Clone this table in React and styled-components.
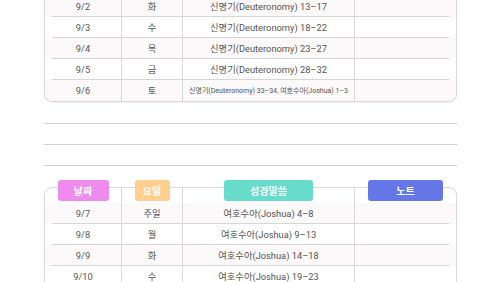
import React from 'react';
import styled, { createGlobalStyle } from 'styled-components';

const GlobalStyle = createGlobalStyle`
  html, body {
    margin: 0;
    padding: 0;
    background: #ffffff;
    overflow: hidden;
  }
  body {
    font-family: Roboto, 'Noto Sans CJK KR', sans-serif;
    color: #555;
  }
`;

const Page = styled.div`
  width: 500px;
  height: 282px;
  overflow: hidden;
  padding: 0 43px 0 44px;
  box-sizing: border-box;
`;

const Card = styled.div`
  position: relative;
  border: 1px solid #d9d9d9;
  border-radius: 8px;
  background: #fff;
  box-shadow: 0 1px 2px rgba(0, 0, 0, 0.06);
  margin-top: ${p => p.$offset || 0}px;
  padding-bottom: ${p => p.$tail || 0}px;
`;

const Grid = styled.div`
  display: grid;
  grid-template-columns: 77px 61px 172px 1fr;
`;

const HeaderRow = styled(Grid)`
  height: 15px;
`;

const Row = styled(Grid)`
  position: relative;
  height: 21px;
  background: ${p => (p.$tint ? '#fbf9fa' : '#fff')};
  border-radius: ${p => (p.$last ? '0 0 8px 8px' : '0')};

  &::after {
    content: '';
    display: ${p => (p.$last ? 'none' : 'block')};
    position: absolute;
    left: 7px;
    right: 7px;
    bottom: 0;
    height: 1px;
    background: #d6d6d6;
  }
`;

const Cell = styled.div`
  display: flex;
  align-items: center;
  justify-content: center;
  padding-bottom: 1px;
  border-right: ${p => (p.$end ? 'none' : '1px solid #d9d9d9')};
  font-size: ${p => (p.$small ? '7px' : '9.3px')};
  white-space: nowrap;
`;

const HeadCell = styled(Cell)`
  align-items: flex-start;
  padding-bottom: 0;
`;

const Badge = styled.div`
  margin-top: -8px;
  width: ${p => p.$w}px;
  height: 21px;
  border-radius: 3px;
  background: ${p => p.$bg};
  color: #fff;
  font-family: 'Noto Sans CJK KR', sans-serif;
  font-weight: 700;
  font-size: 10px;
  display: flex;
  align-items: center;
  justify-content: center;
  position: relative;
  z-index: 1;
`;

const Lines = styled.div`
  padding-top: 21px;
  margin-bottom: 21px;
  display: flex;
  flex-direction: column;
  gap: 20px;
`;

const Line = styled.div`
  height: 1px;
  background: #d2d2d2;
`;

const topRows = [
  ['9/2', '화', '신명기(Deuteronomy) 13–17'],
  ['9/3', '수', '신명기(Deuteronomy) 18–22'],
  ['9/4', '목', '신명기(Deuteronomy) 23–27'],
  ['9/5', '금', '신명기(Deuteronomy) 28–32'],
  ['9/6', '토', '신명기(Deuteronomy) 33–34, 여호수아(Joshua) 1–3', true],
];

const bottomRows = [
  ['9/7', '주일', '여호수아(Joshua) 4–8'],
  ['9/8', '월', '여호수아(Joshua) 9–13'],
  ['9/9', '화', '여호수아(Joshua) 14–18'],
  ['9/10', '수', '여호수아(Joshua) 19–23'],
];

const headers = [
  { label: '날짜', w: 51, bg: '#ef8bef' },
  { label: '요일', w: 35, bg: '#fecf8f' },
  { label: '성경말씀', w: 89, bg: '#67dccd' },
  { label: '노트', w: 75, bg: '#6577e6' },
];

const TableRows = ({ rows, open }) =>
  rows.map((r, i) => (
    <Row key={r[0]} $tint={i % 2 === 0} $last={!open && i === rows.length - 1}>
      <Cell>{r[0]}</Cell>
      <Cell>{r[1]}</Cell>
      <Cell $small={r[3]}>{r[2]}</Cell>
      <Cell $end />
    </Row>
  ));

export default function App() {
  return (
    <>
      <GlobalStyle />
      <Page>
        <Card $offset={-26}>
          <Row />
          <TableRows rows={topRows} />
        </Card>
        <Lines>
          <Line />
          <Line />
          <Line />
        </Lines>
        <Card $tail={40}>
          <HeaderRow>
            {headers.map((h, i) => (
              <HeadCell key={h.label} $end={i === headers.length - 1}>
                <Badge $w={h.w} $bg={h.bg}>{h.label}</Badge>
              </HeadCell>
            ))}
          </HeaderRow>
          <TableRows rows={bottomRows} open />
        </Card>
      </Page>
    </>
  );
}
